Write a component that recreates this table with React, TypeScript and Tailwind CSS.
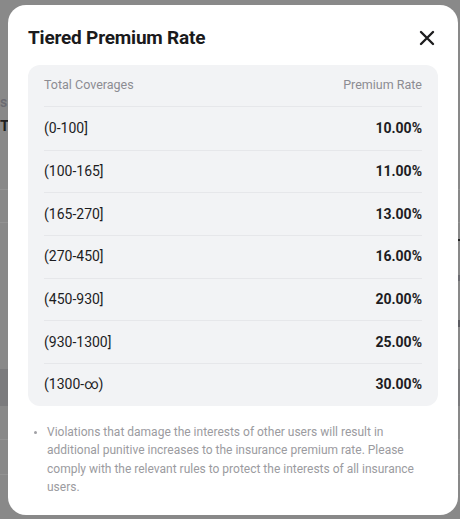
const tiers = [
  { range: "(0-100]", rate: "10.00%" },
  { range: "(100-165]", rate: "11.00%" },
  { range: "(165-270]", rate: "13.00%" },
  { range: "(270-450]", rate: "16.00%" },
  { range: "(450-930]", rate: "20.00%" },
  { range: "(930-1300]", rate: "25.00%" },
  { range: "(1300-∞)", rate: "30.00%" },
];

const CloseIcon = () => (
  <svg width="16" height="16" viewBox="0 0 16 16" fill="none">
    <path d="M2 2L14 14M14 2L2 14" stroke="#1d1d1f" strokeWidth="2.4" strokeLinecap="round" />
  </svg>
);

export default function App() {
  return (
    <div className="relative h-[519px] w-[460px] overflow-hidden bg-[#898989] font-['Roboto','Inter',sans-serif]">
      {/* page behind the overlay */}
      <div className="flex flex-col pt-[92px]">
        <div className="flex h-[20px] items-center">
          <span className="text-[14px] font-semibold leading-none text-[#6b6b72]">s</span>
        </div>
        <div className="flex h-[28px] items-center">
          <span className="text-[15px] font-bold leading-none text-[#1f1f1f]">T</span>
        </div>
        <div className="h-[50px] border-b border-[#939393]" />
        <div className="h-[33px] border-b border-[#939393]" />
        <div className="flex h-[34px] items-center justify-end">
          <div className="h-[2px] w-[4px] bg-[#222]" />
        </div>
        <div className="flex h-[42px] items-center justify-end">
          <div className="h-[6px] w-[3px] bg-[#6c6c72]" />
        </div>
        <div className="flex h-[48px] items-center justify-end">
          <div className="h-[7px] w-[3px] bg-[#5c5c62]" />
        </div>
        <div className="h-[22px]" />
        <div className="h-[37px] bg-[#7b7b7d]" />
        <div className="h-[34px] border-b border-[#939393]" />
        <div className="h-[35px] border-b border-[#939393]" />
      </div>

      {/* modal */}
      <div className="absolute left-[8px] top-[5px] flex h-[510px] w-[450px] flex-col rounded-[18px] bg-white px-5 pt-[19px]">
        <div className="flex h-7 items-center justify-between">
          <h2 className="text-[19px] font-bold leading-7 tracking-[-0.2px] text-[#1a1a1c]">Tiered Premium Rate</h2>
          <button className="mr-[1px] flex h-5 w-5 items-center justify-center">
            <CloseIcon />
          </button>
        </div>

        <div className="mt-[13px] rounded-xl bg-[#f2f3f5] px-4">
          <div className="flex h-[42px] items-center justify-between border-b border-[#e6e7ea] text-[12.5px] text-[#8c8c92]">
            <span>Total Coverages</span>
            <span>Premium Rate</span>
          </div>
          {tiers.map((t, i) => (
            <div
              key={t.range}
              className={
                i === 0
                  ? "flex h-[42.67px] items-center justify-between text-[14px] text-[#1d1d1f]"
                  : "flex h-[42.67px] items-center justify-between border-t border-[#e6e7ea] text-[14px] text-[#1d1d1f]"
              }
            >
              <span>{t.range}</span>
              <span className="font-bold">{t.rate}</span>
            </div>
          ))}
        </div>

        <div className="mt-[17px] flex gap-[10px] pl-[6px] text-[12px] leading-[18.5px] text-[#9b9ba0]">
          <span className="mt-[8px] h-[3px] w-[3px] shrink-0 rounded-full bg-[#a0a0a5]" />
          <p>
            Violations that damage the interests of other users will result in additional punitive increases to the
            insurance premium rate. Please comply with the relevant rules to protect the interests of all insurance
            users.
          </p>
        </div>
      </div>
    </div>
  );
}
